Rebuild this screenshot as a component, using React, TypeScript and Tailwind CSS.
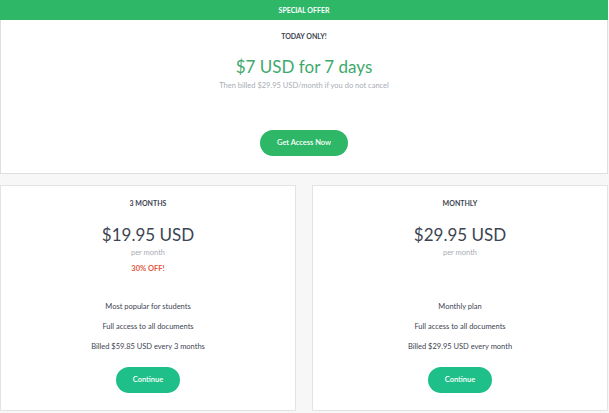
import React from 'react';

interface PlanProps {
    label: string;
    price: string;
    discount?: string;
    features: string[];
}

function PlanCard({ label, price, discount, features }: PlanProps) {
    return (
        <div className="flex flex-col items-center border border-[#e3e3e3] bg-white h-[226px]">
            <div className="mt-[14px] text-[7px] font-bold uppercase text-[#3d4451] leading-none">{label}</div>
            <div className="mt-[19px] text-[17px] text-[#3d4451] leading-none">{price}</div>
            <div className="mt-[6px] text-[7.5px] text-[#a9adb5] leading-none">per month</div>
            {discount ? (
                <div className="mt-[8px] text-[7.5px] font-bold text-[#e0573f] leading-none">{discount}</div>
            ) : (
                <div className="mt-[8px] h-[7.5px]" />
            )}
            <div className="mt-[30px] flex flex-col items-center gap-[11px] text-[7.5px] text-[#3d4451] leading-[9px]">
                {features.map((f) => (
                    <div key={f}>{f}</div>
                ))}
            </div>
            <button className="mt-[16px] h-[26px] w-[64px] rounded-full bg-[#1fbf8a] text-[7.5px] font-semibold text-white">
                Continue
            </button>
        </div>
    );
}

export default function App() {
    return (
        <div className="w-[609px] h-[413px] overflow-hidden bg-[#f7f7f7] font-['Lato',sans-serif]">
            <div className="w-[608px]">
                {/* Offer banner */}
                <div className="flex h-[20px] items-center justify-center bg-[#2db767] text-[7px] font-bold text-white">
                    SPECIAL OFFER
                </div>
                <div className="flex h-[154px] flex-col items-center border-x border-b border-[#dedede] bg-white">
                    <div className="mt-[13px] text-[7px] font-bold text-[#3d4451] leading-none">TODAY ONLY!</div>
                    <div className="mt-[18px] text-[17px] text-[#3ea96c] leading-none">$7 USD for 7 days</div>
                    <div className="mt-[7px] text-[7.5px] text-[#a9adb5] leading-none">
                        Then billed $29.95 USD/month if you do not cancel
                    </div>
                    <button className="mt-[40px] h-[26px] w-[88px] rounded-full bg-[#2db767] text-[7.5px] font-semibold text-white">
                        Get Access Now
                    </button>
                </div>

                {/* Plans */}
                <div className="mt-[11px] grid grid-cols-2 gap-[16px]">
                    <PlanCard
                        label="3 Months"
                        price="$19.95 USD"
                        discount="30% OFF!"
                        features={['Most popular for students', 'Full access to all documents', 'Billed $59.85 USD every 3 months']}
                    />
                    <PlanCard
                        label="Monthly"
                        price="$29.95 USD"
                        features={['Monthly plan', 'Full access to all documents', 'Billed $29.95 USD every month']}
                    />
                </div>
            </div>
        </div>
    );
}
